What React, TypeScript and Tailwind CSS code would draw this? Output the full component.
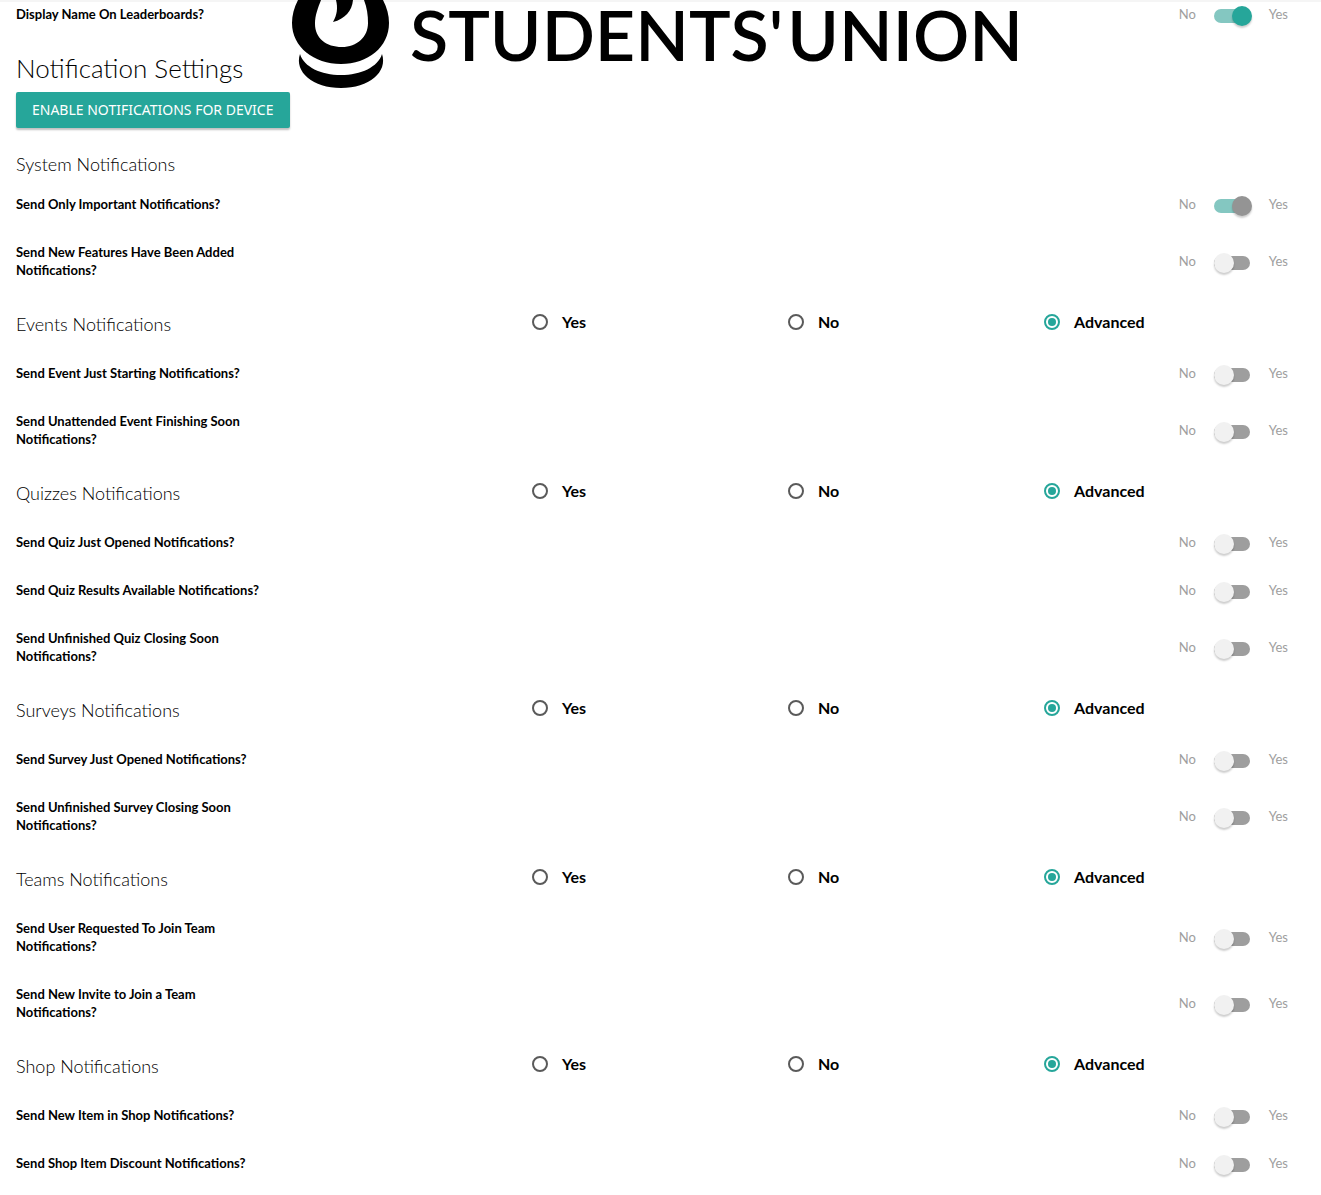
import { useId, useState } from 'react';

type Setting = { label: string; on?: boolean; disabled?: boolean };
type Group = { title: string; settings: Setting[] };

const systemSettings: Setting[] = [
  { label: 'Send Only Important Notifications?', on: true, disabled: true },
  { label: 'Send New Features Have Been Added Notifications?' },
];

const groups: Group[] = [
  {
    title: 'Events Notifications',
    settings: [
      { label: 'Send Event Just Starting Notifications?' },
      { label: 'Send Unattended Event Finishing Soon Notifications?' },
    ],
  },
  {
    title: 'Quizzes Notifications',
    settings: [
      { label: 'Send Quiz Just Opened Notifications?' },
      { label: 'Send Quiz Results Available Notifications?' },
      { label: 'Send Unfinished Quiz Closing Soon Notifications?' },
    ],
  },
  {
    title: 'Surveys Notifications',
    settings: [
      { label: 'Send Survey Just Opened Notifications?' },
      { label: 'Send Unfinished Survey Closing Soon Notifications?' },
    ],
  },
  {
    title: 'Teams Notifications',
    settings: [
      { label: 'Send User Requested To Join Team Notifications?' },
      { label: 'Send New Invite to Join a Team Notifications?' },
    ],
  },
  {
    title: 'Shop Notifications',
    settings: [
      { label: 'Send New Item in Shop Notifications?' },
      { label: 'Send Shop Item Discount Notifications?' },
    ],
  },
];

const modes = ['Yes', 'No', 'Advanced'];

function SettingRow({ label, on = false, disabled = false }: Setting) {
  const id = useId();
  const [checked, setChecked] = useState(on);

  return (
    <div className="flex items-center justify-between py-[15px] pr-2">
      <label htmlFor={id} className="w-1/5 text-[13px] leading-[18px] font-bold text-black">
        {label}
      </label>
      <div className="flex items-center text-[13px] leading-[18px] text-[#9e9e9e]">
        <span>No</span>
        <input
          id={id}
          type="checkbox"
          role="switch"
          checked={checked}
          disabled={disabled}
          onChange={(e) => setChecked(e.target.checked)}
          className="mr-[19px] ml-[18px] mt-[3px] flex h-[14px] w-9 appearance-none items-center rounded-full bg-[#9e9e9e]
                     before:size-5 before:shrink-0 before:rounded-full before:bg-[#f1f1f1] before:shadow-[0_2px_2px_rgba(0,0,0,0.2)]
                     before:content-[''] checked:bg-[#84c7c1] checked:before:translate-x-[18px] checked:before:bg-[#26a69a]
                     disabled:before:bg-[#949494]"
        />
        <span>Yes</span>
      </div>
    </div>
  );
}

function GroupHeader({ title }: { title: string }) {
  const [mode, setMode] = useState('Advanced');

  return (
    <div role="radiogroup" aria-label={title} className="grid h-[55px] grid-cols-5 items-center">
      <h3 className="col-span-2 pt-1 text-[18px] leading-5 font-light text-black">{title}</h3>
      {modes.map((m) => (
        <label key={m} className="flex items-center gap-[14px] pl-1 text-[16px] leading-5 font-bold text-black">
          <input
            type="radio"
            name={title}
            checked={mode === m}
            onChange={() => setMode(m)}
            className="flex size-4 appearance-none items-center justify-center rounded-full border-2 border-[#5a5a5a]
                       checked:border-[#26a69a] checked:before:size-2 checked:before:rounded-full
                       checked:before:bg-[#26a69a] checked:before:content-['']"
          />
          {m}
        </label>
      ))}
    </div>
  );
}

function UnionLogo() {
  return (
    <div className="pointer-events-none absolute -top-0.5 left-[292px] flex">
      <svg width="98" height="90" viewBox="0 0 98 90" aria-hidden="true">
        <path
          fillRule="evenodd"
          d="M6 0C2 8 0 15 0 23C0 47 22 64 49 64C76 64 97 47 97 23C97 15 95 8 91 0H72C75 8 76 15 76 23C76 37 65 47 50 47C34 47 23 38 23 24C23 15 26 8 29 0Z"
        />
        <path d="M44 0H61C60 11 53 19 41 22C45 15 46 8 44 0Z" />
        <path d="M8 54C12 67 29 75 49 75C69 75 86 67 90 54C96 72 77 88 49 88C21 88 2 72 8 54Z" />
      </svg>
      <p className="flex gap-1 pl-5 text-[70px] leading-[68px] font-semibold whitespace-nowrap text-black">
        <span>STUDENTS'</span>
        <span>UNION</span>
      </p>
    </div>
  );
}

export default function App() {
  return (
    <main className="relative border-t-2 border-[#f5f5f5] bg-white pr-[25px] pb-2 pl-4 font-[Lato,'Open_Sans',sans-serif]">
      <UnionLogo />
      <div className="-mt-3">
        <SettingRow label="Display Name On Leaderboards?" on />
      </div>

      <h2 className="pt-[9px] pb-[3px] text-[26px] leading-[42px] font-light text-black">Notification Settings</h2>
      <button
        type="button"
        className="block h-9 rounded-xs bg-[#26a69a] px-4 pb-0.5 font-['Noto_Sans',sans-serif] text-[14px] whitespace-nowrap text-white uppercase shadow-[0_2px_2px_rgba(0,0,0,0.25)]"
      >
        Enable Notifications For Device
      </button>

      <h3 className="pt-[26px] pb-[6px] text-[18px] leading-5 font-light text-black">System Notifications</h3>
      {systemSettings.map((s) => (
        <SettingRow key={s.label} {...s} />
      ))}

      {groups.map((g) => (
        <section key={g.title}>
          <GroupHeader title={g.title} />
          {g.settings.map((s) => (
            <SettingRow key={s.label} {...s} />
          ))}
        </section>
      ))}
    </main>
  );
}
